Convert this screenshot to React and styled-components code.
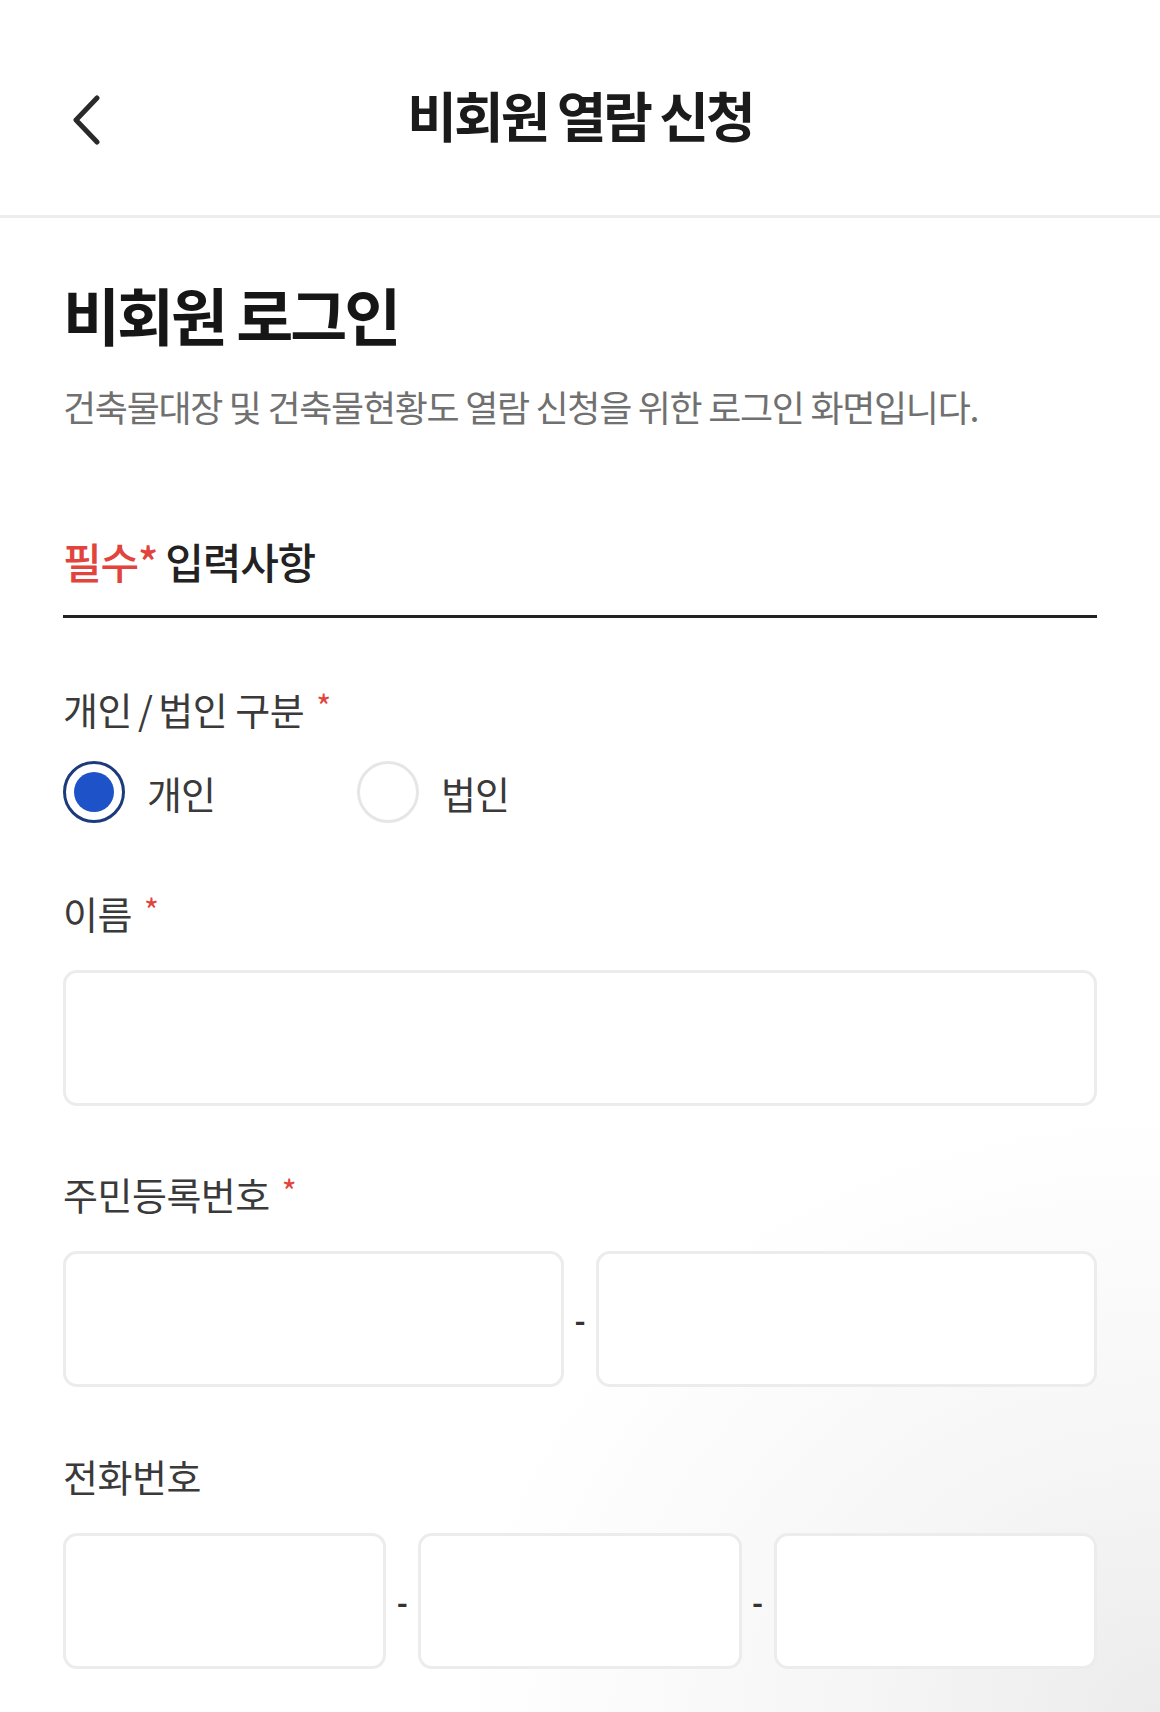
import React, { useState } from 'react';
import styled, { createGlobalStyle } from 'styled-components';

const GlobalStyle = createGlobalStyle`
  * { box-sizing: border-box; }
  html, body {
    margin: 0;
    padding: 0;
    background: #ffffff;
  }
  body {
    font-family: "Noto Sans CJK KR", "Noto Sans", sans-serif;
    color: #222;
  }
`;

const Page = styled.div`
  width: 1160px;
  min-height: 1712px;
  background: radial-gradient(ellipse 700px 600px at 1160px 1712px, #ececec 0%, #f6f6f6 45%, #ffffff 100%);
`;

const Header = styled.header`
  position: relative;
  height: 218px;
  padding-top: 14px;
  display: flex;
  align-items: center;
  justify-content: center;
  border-bottom: 3px solid #ededed;
  background: #fff;
`;

const BackButton = styled.button`
  position: absolute;
  left: 66px;
  top: 92px;
  width: 40px;
  height: 56px;
  padding: 0;
  border: 0;
  background: none;
  display: flex;
  align-items: center;
  justify-content: center;
`;

const HeaderTitle = styled.h1`
  margin: 0;
  font-size: 54px;
  font-weight: 700;
  letter-spacing: -3px;
  color: #1b1b1b;
`;

const Content = styled.main`
  padding: 0 63px;
`;

const Heading = styled.h2`
  margin: 56px 0 0;
  font-size: 62px;
  line-height: 80px;
  font-weight: 700;
  letter-spacing: -3px;
  color: #161616;
`;

const Description = styled.p`
  margin: 27px 0 0;
  font-size: 36px;
  line-height: 50px;
  letter-spacing: -1.3px;
  color: #707070;
`;

const SectionTitle = styled.div`
  margin-top: 102px;
  padding-bottom: 26px;
  border-bottom: 3px solid #222;
  font-size: 42px;
  line-height: 56px;
  font-weight: 500;
  letter-spacing: -1.2px;
  color: #222;
`;

const Required = styled.span`
  color: #e0443c;
`;

const Field = styled.div`
  margin-top: ${(p) => p.$top}px;
`;

const Label = styled.div`
  font-size: 38px;
  line-height: 50px;
  letter-spacing: -0.5px;
  color: #3a3a3a;
`;

const Slash = styled.span`
  margin: 0 6px;
`;

const Star = styled.span`
  color: #e0443c;
  margin-left: 12px;
  font-size: 32px;
  vertical-align: 6px;
`;

const RadioGroup = styled.div`
  display: flex;
  align-items: center;
  margin-top: 27px;
`;

const RadioOption = styled.label`
  display: flex;
  align-items: center;
  width: 294px;
  font-size: 38px;
  letter-spacing: -1px;
  color: #3a3a3a;
  cursor: pointer;
`;

const RadioCircle = styled.span`
  width: 62px;
  height: 62px;
  border-radius: 50%;
  border: 3px solid ${(p) => (p.$checked ? '#1c3b7c' : '#e6e6e6')};
  display: flex;
  align-items: center;
  justify-content: center;
  margin-right: 22px;
  background: #fff;

  &::after {
    content: '';
    width: 40px;
    height: 40px;
    border-radius: 50%;
    background: ${(p) => (p.$checked ? '#1e52c8' : 'transparent')};
  }
`;

const InputRow = styled.div`
  display: flex;
  align-items: center;
  margin-top: 32px;
`;

const Input = styled.input`
  flex: 1;
  min-width: 0;
  height: 136px;
  border: 3px solid #ececec;
  border-radius: 14px;
  background: #fff;
  padding: 0 28px;
  font-size: 38px;
  font-family: inherit;
  outline: none;
`;

const Dash = styled.span`
  width: 32px;
  text-align: center;
  font-size: 30px;
  font-weight: 700;
  color: #333;
`;

function BackIcon() {
  return (
    <svg width="32" height="50" viewBox="0 0 32 50" fill="none">
      <path d="M27 3 L6 25 L27 47" stroke="#2a2a2a" strokeWidth="5" strokeLinecap="round" strokeLinejoin="round" />
    </svg>
  );
}

export default function App() {
  const [type, setType] = useState('personal');

  return (
    <Page>
      <GlobalStyle />
      <Header>
        <BackButton aria-label="뒤로가기">
          <BackIcon />
        </BackButton>
        <HeaderTitle>비회원 열람 신청</HeaderTitle>
      </Header>
      <Content>
        <Heading>비회원 로그인</Heading>
        <Description>건축물대장 및 건축물현황도 열람 신청을 위한 로그인 화면입니다.</Description>

        <SectionTitle>
          <Required>필수*</Required> 입력사항
        </SectionTitle>

        <Field $top={62}>
          <Label>
            개인<Slash>/</Slash>법인 구분<Star>*</Star>
          </Label>
          <RadioGroup>
            <RadioOption onClick={() => setType('personal')}>
              <RadioCircle $checked={type === 'personal'} />
              개인
            </RadioOption>
            <RadioOption onClick={() => setType('corp')}>
              <RadioCircle $checked={type === 'corp'} />
              법인
            </RadioOption>
          </RadioGroup>
        </Field>

        <Field $top={61}>
          <Label>
            이름<Star>*</Star>
          </Label>
          <InputRow>
            <Input />
          </InputRow>
        </Field>

        <Field $top={59}>
          <Label>
            주민등록번호<Star>*</Star>
          </Label>
          <InputRow>
            <Input />
            <Dash>-</Dash>
            <Input />
          </InputRow>
        </Field>

        <Field $top={64}>
          <Label>전화번호</Label>
          <InputRow>
            <Input />
            <Dash>-</Dash>
            <Input />
            <Dash>-</Dash>
            <Input />
          </InputRow>
        </Field>
      </Content>
    </Page>
  );
}
